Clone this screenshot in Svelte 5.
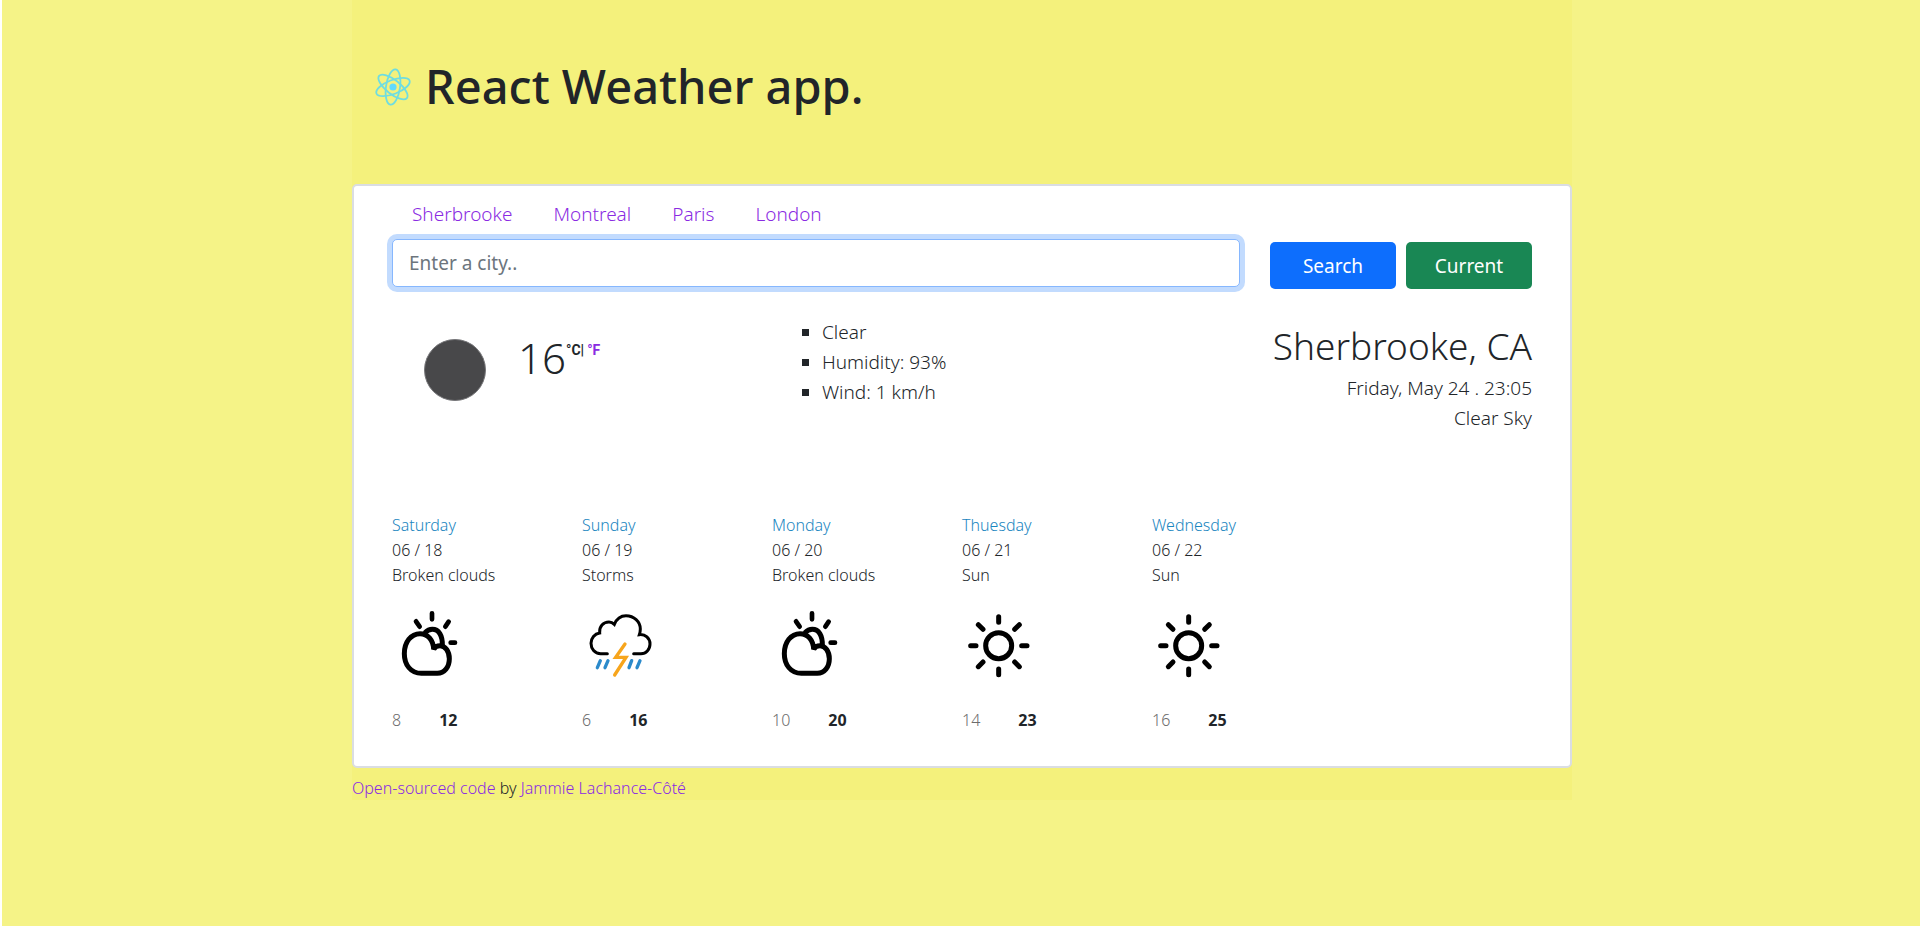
<script>
  const cities = ['Sherbrooke', 'Montreal', 'Paris', 'London'];
  const details = ['Clear', 'Humidity: 93%', 'Wind: 1 km/h'];
  const forecast = [
    { day: 'Saturday', date: '06 / 18', sky: 'Broken clouds', icon: 'clouds', low: 8, high: 12 },
    { day: 'Sunday', date: '06 / 19', sky: 'Storms', icon: 'storm', low: 6, high: 16 },
    { day: 'Monday', date: '06 / 20', sky: 'Broken clouds', icon: 'clouds', low: 10, high: 20 },
    { day: 'Thuesday', date: '06 / 21', sky: 'Sun', icon: 'sun', low: 14, high: 23 },
    { day: 'Wednesday', date: '06 / 22', sky: 'Sun', icon: 'sun', low: 16, high: 25 }
  ];
  let city = $state('');
</script>

<div class="page">
  <div class="container">
    <header>
      <svg class="logo" viewBox="-20 -21 40 40" aria-hidden="true">
        <circle r="3.6" fill="#61dafb" />
        <g fill="none" stroke="#6fdde0" stroke-width="1.8">
          <ellipse rx="17.8" ry="7" transform="rotate(-81.5)" />
          <ellipse rx="17.8" ry="7" transform="rotate(-21.5)" />
          <ellipse rx="17.8" ry="7" transform="rotate(38.5)" />
        </g>
      </svg>
      <h1>React Weather app.</h1>
    </header>

    <main>
      <nav>
        {#each cities as name}
          <a href="#{name}">{name}</a>
        {/each}
      </nav>

      <form onsubmit={(e) => e.preventDefault()}>
        <input type="search" placeholder="Enter a city.." aria-label="City" bind:value={city} />
        <div class="actions">
          <button class="search" type="submit">Search</button>
          <button class="current" type="button">Current</button>
        </div>
      </form>

      <section class="now">
        <div class="reading">
          <svg class="moon" viewBox="0 0 64 64" aria-hidden="true">
            <circle cx="32" cy="32" r="30.5" fill="#48484a" stroke="#77777a" stroke-width="1" />
          </svg>
          <span class="degrees">16</span>
          <span class="units">°C|<a href="#fahrenheit">°F</a></span>
        </div>
        <ul>
          {#each details as item}
            <li>{item}</li>
          {/each}
        </ul>
        <div class="place">
          <h2>Sherbrooke, CA</h2>
          <p>Friday, May 24 . 23:05</p>
          <p>Clear Sky</p>
        </div>
      </section>

      <section class="forecast">
        {#each forecast as f}
          <article>
            <h3>{f.day}</h3>
            <p>{f.date}</p>
            <p>{f.sky}</p>
            {#if f.icon === 'clouds'}
              <svg class="icon" viewBox="36 324 225 225" aria-hidden="true">
                <g fill="none" stroke="#000" stroke-width="15" stroke-linejoin="miter">
                  <path d="M134 402C142 394 149 391 157 391C176 391 188 409 187 440" />
                  <path d="M124 523C93 523 73 498 73 464C73 429 93 404 120 404C144 404 160 424 161 451C165 443 172 440 180 440C196 440 208 458 208 479C208 504 193 523 172 523Z" />
                  <path stroke-linecap="round" stroke-width="14" d="M156 343V361M108 367L119 383M206 368L196 383M212 431H225" />
                </g>
              </svg>
            {:else if f.icon === 'storm'}
              <svg class="icon" viewBox="66 54 225 225" aria-hidden="true">
                <g fill="none" stroke-width="9" stroke-linecap="round">
                  <path stroke="#000" d="M142 194H122C104 194 93 179 93 163C93 147 104 134 119 132C117 112 130 99 147 99C153 99 158 101 163 106C170 89 182 80 198 80C222 80 241 98 241 120C241 127 240 131 238 137C256 135 270 148 270 165C270 182 258 194 243 194H221" />
                  <path stroke="#f7a51c" stroke-linejoin="miter" stroke-width="10" d="M195 165L167 205H198L164 258" />
                  <path stroke="#2b8acb" stroke-width="10" d="M121 215L112 236M144 215L135 236M215 215L207 236M240 215L231 236" />
                </g>
              </svg>
            {:else}
              <svg class="icon" viewBox="666 324 225 225" aria-hidden="true">
                <g fill="none" stroke="#000" stroke-width="15" stroke-linecap="round">
                  <circle cx="776" cy="440" r="39" />
                  <path d="M776 353V370M776 510V527M692 440H708M845 440H861M715 377L729 391M838 377L824 391M715 503L729 489M838 503L824 489" />
                </g>
              </svg>
            {/if}
            <div class="temps"><span>{f.low}</span><strong>{f.high}</strong></div>
          </article>
        {/each}
      </section>
    </main>

    <footer>
      <a href="#code">Open-sourced code</a> by <a href="#author">Jammie Lachance-Côté</a>
    </footer>
  </div>
</div>

<style>
  :global(body) {
    margin: 0;
    background: #f5f387;
  }
  .page {
    box-sizing: border-box;
    min-height: 100vh;
    border-left: 2px solid #fff;
    padding-left: 2px;
    color: #212529;
    font: 300 19px/30px 'Noto Sans', 'Open Sans', sans-serif;
  }
  .container {
    max-width: 1220px;
    margin: 0 auto;
    background: #f4f17c;
  }
  h1, h2, h3, p, ul {
    margin: 0;
    padding: 0;
  }
  a {
    color: #8a2be2;
    text-decoration: none;
  }
  header {
    display: flex;
    align-items: center;
    gap: 12px;
    padding: 56px 21px 68px;
  }
  .logo {
    width: 40px;
    height: 40px;
  }
  h1 {
    font-size: 47px;
    font-weight: 500;
    line-height: 60px;
  }
  main {
    border: 2px solid #dadde2;
    border-radius: 5px;
    padding: 13px 38px 33px;
    background: #fff;
  }
  nav {
    display: flex;
    gap: 41px;
    padding: 0 20px 10px;
  }
  form {
    display: flex;
    align-items: flex-end;
    gap: 30px;
  }
  input {
    flex: 1;
    box-sizing: border-box;
    min-width: 0;
    height: 48px;
    margin-bottom: 2px;
    border: 1px solid #86b7fe;
    border-radius: 5px;
    padding: 0 16px;
    outline: 0;
    box-shadow: 0 0 0 5px rgba(13, 110, 253, 0.25);
    background: #fff;
    color: #212529;
    font: inherit;
    font-weight: 400;
    appearance: none;
  }
  input::placeholder {
    color: #6c757d;
    opacity: 1;
  }
  .actions {
    display: grid;
    grid-template-columns: 126px 126px;
    gap: 10px;
  }
  button {
    height: 47px;
    border: 0;
    border-radius: 5px;
    padding: 0;
    color: #fff;
    font: inherit;
    font-weight: 400;
  }
  .search {
    background: #0d6efd;
  }
  .current {
    background: #198754;
  }
  .now {
    display: grid;
    grid-template-columns: repeat(3, 1fr);
    padding: 28px 0 80px;
  }
  .reading {
    display: flex;
    align-items: flex-start;
    padding: 21px 0 0 31px;
  }
  .moon {
    width: 64px;
    height: 64px;
    margin-right: 31px;
  }
  .degrees {
    font-size: 42px;
    line-height: 40px;
  }
  .units {
    font: 700 14px/24px Roboto, sans-serif;
  }
  .units a {
    margin-left: 3px;
  }
  ul {
    padding: 0 0 0 50px;
    list-style: square;
  }
  .place {
    padding-top: 5px;
    text-align: right;
  }
  h2 {
    margin-bottom: 3px;
    font-size: 37px;
    font-weight: 300;
    line-height: 48px;
  }
  .forecast {
    display: grid;
    grid-template-columns: repeat(6, 1fr);
    font-size: 16px;
    line-height: 25px;
  }
  h3 {
    color: #1a86bf;
    font-size: 16px;
    font-weight: 300;
  }
  .icon {
    display: block;
    width: 75px;
    height: 75px;
    margin: 19px 0 26px;
  }
  .temps {
    display: flex;
    gap: 38px;
  }
  .temps span {
    color: #6c6c6c;
  }
  .temps strong {
    font-weight: 700;
  }
  footer {
    padding: 8px 0 0;
    font-size: 16px;
    line-height: 24px;
  }
</style>
